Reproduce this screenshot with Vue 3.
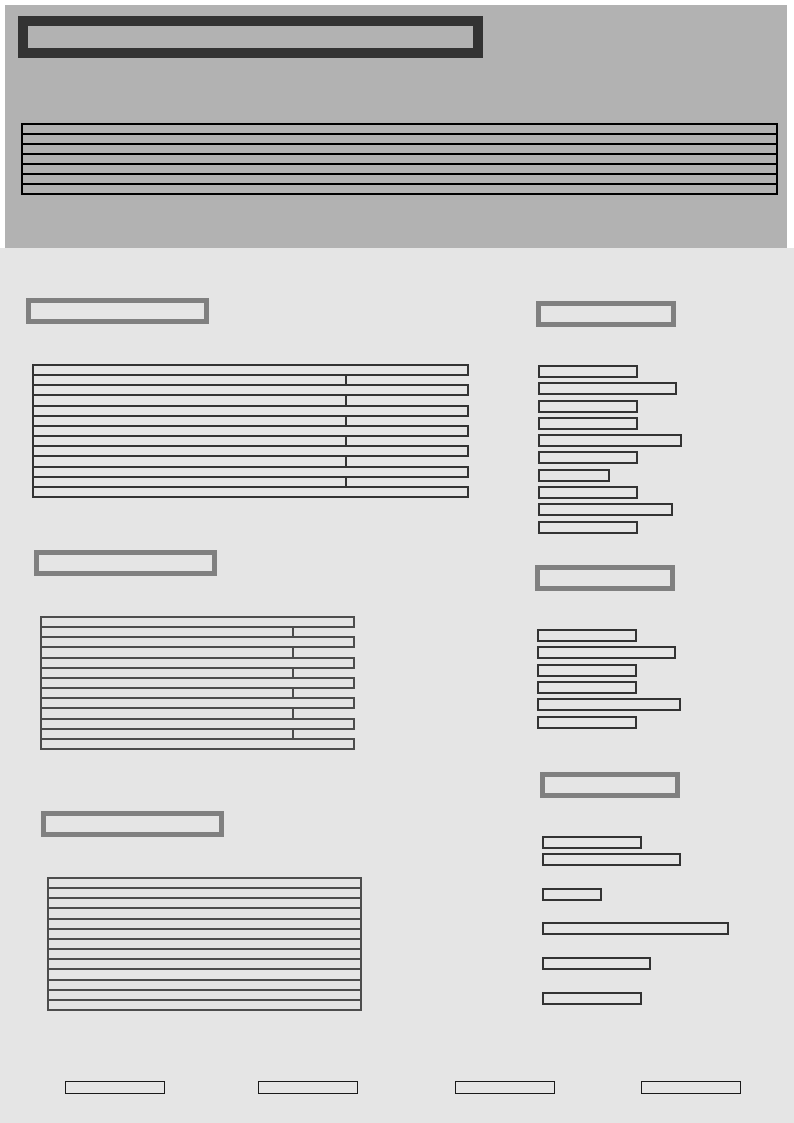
<script setup>
const bannerRows = 7

const alternating = Array.from({ length: 13 }, (_, i) => (i % 2 ? 'short' : 'long'))
const uniform = Array.from({ length: 13 }, () => 'long')

const articles = [
  { name: 'first', rows: alternating },
  { name: 'second', rows: alternating },
  { name: 'third', rows: uniform }
]

// Widths of the entries in each side list; 0 leaves the line blank.
const asides = [
  { name: 'upper', rows: [100, 139, 100, 100, 144, 100, 72, 100, 135, 100] },
  { name: 'middle', rows: [100, 139, 100, 100, 144, 100] },
  { name: 'lower', rows: [100, 139, 0, 60, 0, 187, 0, 109, 0, 100] }
]

const footerItems = 4
</script>

<template>
  <div class="page">
    <header class="banner">
      <div class="title"></div>
      <ul class="banner-lines">
        <li v-for="n in bannerRows" :key="n"></li>
      </ul>
    </header>

    <div class="body">
      <div class="columns">
        <main class="articles">
          <section v-for="a in articles" :key="a.name" class="article" :class="a.name">
            <div class="heading wide"></div>
            <ul class="lines">
              <li v-for="(kind, i) in a.rows" :key="i" :class="kind"></li>
            </ul>
          </section>
        </main>

        <aside class="side">
          <section v-for="s in asides" :key="s.name" class="group" :class="s.name">
            <div class="heading"></div>
            <ul class="entries">
              <li v-for="(w, i) in s.rows" :key="i">
                <div v-if="w" class="entry" :style="{ width: w + 'px' }"></div>
              </li>
            </ul>
          </section>
        </aside>
      </div>

      <footer class="footer">
        <div v-for="n in footerItems" :key="n" class="footer-item"></div>
      </footer>
    </div>
  </div>
</template>

<style>
body {
  background: #ffffff;
}
</style>

<style scoped>
.page,
.page * {
  box-sizing: border-box;
}

.page {
  display: flex;
  flex-direction: column;
  min-height: 100vh;
  padding-top: 5px;
  font-family: "Liberation Sans", sans-serif;
}

ul {
  list-style: none;
  margin: 0;
  padding: 0;
}

.banner {
  margin: 0 7px 0 5px;
  padding: 11px 9px 53px 13px;
  background: #b2b2b2;
}

.title {
  width: 465px;
  max-width: 100%;
  height: 42px;
  border: 10px solid #333333;
}

.banner-lines {
  margin: 65px 0 0 3px;
}

.banner-lines li {
  height: 12px;
  border: 2px solid #000000;
}

.banner-lines li + li {
  margin-top: -2px;
}

.body {
  flex: 1;
  padding-bottom: 29px;
  background: #e5e5e5;
}

.columns {
  display: grid;
  grid-template-columns: 535fr 259fr;
}

.articles {
  padding-top: 50px;
}

.heading {
  width: 140px;
  max-width: 100%;
  height: 26px;
  border: 5px solid #808080;
}

.heading.wide {
  width: 183px;
}

.article.first {
  padding-left: 26px;
}

.article.second {
  margin-top: 54px;
  padding-left: 34px;
}

.article.third {
  margin-top: 63px;
  padding-left: 41px;
}

.lines {
  display: grid;
  grid-auto-rows: 1fr;
  height: 132px;
  margin: 40px 0 0 6px;
}

.lines li {
  max-width: 100%;
  margin-bottom: -2px;
  border: 2px solid #4d4d4d;
}

.lines .long {
  width: 315px;
}

.lines .short {
  width: 254px;
}

.first .lines li {
  border-color: #333333;
}

.first .lines .long {
  width: 437px;
}

.first .lines .short {
  width: 315px;
}

.side {
  padding-top: 53px;
}

.group.upper {
  padding-left: 1px;
}

.group.middle {
  margin-top: 27px;
}

.group.lower {
  margin-top: 39px;
  padding-left: 5px;
}

.entries {
  display: grid;
  grid-auto-rows: 1fr;
  height: 173px;
  margin: 38px 0 0 2px;
}

.middle .entries {
  height: 104px;
}

.entry {
  max-width: 100%;
  height: 13px;
  border: 2px solid #333333;
}

.footer {
  display: grid;
  grid-template-columns: 193fr 197fr 186fr 153fr;
  margin-top: 72px;
  padding-left: 65px;
}

.footer-item {
  width: 100px;
  height: 13px;
  border: 1px solid #1a1a1a;
}
</style>
